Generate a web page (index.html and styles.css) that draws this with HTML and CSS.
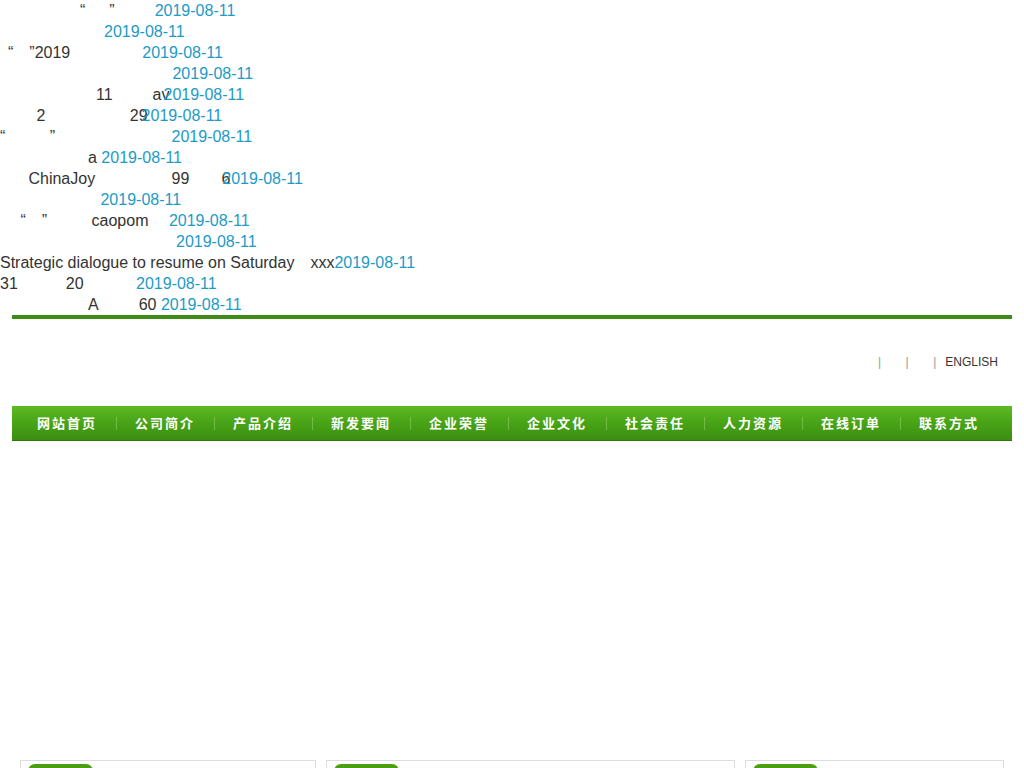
FILE: index.html
```html
<!DOCTYPE html>
<html lang="zh-CN">
<head>
    <meta charset="UTF-8">
    <meta name="viewport" content="width=device-width, initial-scale=1.0">
    <title>企业网站</title>
    <link rel="stylesheet" href="styles.css">
</head>
<body>
    <ul class="news">
        <li><a href="#">&emsp;&emsp;&emsp;&emsp;&emsp;“&emsp;&ensp;”&emsp;&emsp;&ensp;</a><span class="date">2019-08-11</span></li>
        <li><a href="#">&emsp;&emsp;&emsp;&emsp;&emsp;&emsp;&ensp;</a><span class="date">2019-08-11</span></li>
        <li><a href="#">&ensp;“&emsp;”2019&emsp;&emsp;&emsp;&emsp;&ensp;</a><span class="date">2019-08-11</span></li>
        <li><a href="#">&emsp;&emsp;&emsp;&emsp;&emsp;&emsp;&emsp;&emsp;&emsp;&emsp;&ensp; </a><span class="date">2019-08-11</span></li>
        <li><a href="#">&emsp;&emsp;&emsp;&emsp;&emsp;&emsp;11&emsp;&emsp;&ensp;av</a><span class="date over">2019-08-11</span></li>
        <li><a href="#">&emsp;&emsp; 2&emsp;&emsp;&emsp;&emsp;&emsp; 29</a><span class="date over">2019-08-11</span></li>
        <li><a href="#">“&emsp;&emsp;&ensp; ”&emsp;&emsp;&emsp;&emsp;&emsp;&emsp;&emsp; </a><span class="date">2019-08-11</span></li>
        <li><a href="#">&emsp;&emsp;&emsp;&emsp;&emsp;&ensp;a </a><span class="date">2019-08-11</span></li>
        <li><a href="#">&emsp;&ensp; ChinaJoy&emsp;&emsp;&emsp;&emsp;&ensp; 99&emsp;&emsp;6</a><span class="date over-more">2019-08-11</span></li>
        <li><a href="#">&emsp;&emsp;&emsp;&emsp;&emsp;&emsp; </a><span class="date">2019-08-11</span></li>
        <li><a href="#">&emsp; “&emsp;”&emsp;&emsp;&ensp; caopom&emsp; </a><span class="date">2019-08-11</span></li>
        <li><a href="#">&emsp;&emsp;&emsp;&emsp;&emsp;&emsp;&emsp;&emsp;&emsp;&emsp;&emsp;</a><span class="date">2019-08-11</span></li>
        <li><a href="#">Strategic dialogue to resume on Saturday&emsp;xxx</a><span class="date">2019-08-11</span></li>
        <li><a href="#">31&emsp;&emsp;&emsp;20&emsp;&emsp;&emsp; </a><span class="date">2019-08-11</span></li>
        <li><a href="#">&emsp;&emsp;&emsp;&emsp;&emsp;&ensp;A&emsp;&emsp;&ensp;60 </a><span class="date">2019-08-11</span></li>
    </ul>

    <div class="wrap">
        <div class="header">
            <div class="toplinks">
                <span class="sep">|</span><span class="sep">|</span><span class="sep">|</span><a href="#">ENGLISH</a>
            </div>
        </div>

        <ul class="nav">
            <li><a href="#">网站首页</a></li>
            <li><a href="#">公司简介</a></li>
            <li><a href="#">产品介绍</a></li>
            <li><a href="#">新发要闻</a></li>
            <li><a href="#">企业荣誉</a></li>
            <li><a href="#">企业文化</a></li>
            <li><a href="#">社会责任</a></li>
            <li><a href="#">人力资源</a></li>
            <li><a href="#">在线订单</a></li>
            <li><a href="#">联系方式</a></li>
        </ul>

        <div class="banner"></div>

        <div class="boxes">
            <div class="box box-about"><div class="box-hd"><span class="tab"></span></div></div>
            <div class="box box-news"><div class="box-hd"><span class="tab"></span></div></div>
            <div class="box box-contact"><div class="box-hd"><span class="tab"></span></div></div>
        </div>
    </div>
</body>
</html>
```

FILE: styles.css
```css
body { margin: 0; font-family: "Liberation Sans", Arial, "Noto Sans CJK SC", sans-serif; color: #333; background: #fff; }
a { text-decoration: none; color: inherit; }
ul { list-style: none; margin: 0; padding: 0; }

/* latest news list */
.news li { font-size: 16px; line-height: 21px; white-space: pre; }
.news a { color: #333; }
.news .date { color: #1c9bc5; }
.news .over { margin-left: -6px; }
.news .over-more { margin-left: -8px; }

.wrap { width: 1000px; margin: 0 auto; border-top: 4px solid #3e8a17; }

/* header */
.header { height: 87px; }
.toplinks { display: flex; justify-content: flex-end; padding: 35px 14px 0 0; font-size: 12px; line-height: 16px; }
.toplinks .sep { color: #999; padding-right: 24.5px; }
.toplinks .sep:last-of-type { padding-right: 9px; }
.toplinks a { color: #333; }

/* main menu */
.nav { display: flex; height: 34px; padding-left: 6px; background: linear-gradient(#5cba22, #48a317 50%, #3b8f10); border-bottom: 1px solid #2f770c; }
.nav li { position: relative; width: 98px; text-align: center; }
.nav li + li::before { content: ""; position: absolute; left: 0; top: 11px; height: 13px; border-left: 1px solid rgba(190, 235, 160, 0.35); }
.nav a { display: block; line-height: 34px; font-family: "Noto Sans CJK SC", sans-serif; font-size: 13px; font-weight: 700; letter-spacing: 2px; color: #fff; }

.banner { height: 319px; }

/* content boxes */
.boxes { display: flex; gap: 10px; padding: 0 8px; }
.box { height: 220px; border: 1px solid #ddd; }
.box-about { width: 294px; }
.box-news { width: 408px; }
.box-contact { width: 257px; }
.box-hd { height: 30px; padding: 3px 0 0 7px; background: linear-gradient(#fff, #f6f6f6); border-bottom: 1px solid #e5e5e5; }
.tab { display: block; width: 65px; height: 27px; background: #4c9e13; border-radius: 7px 7px 0 0; }
```
